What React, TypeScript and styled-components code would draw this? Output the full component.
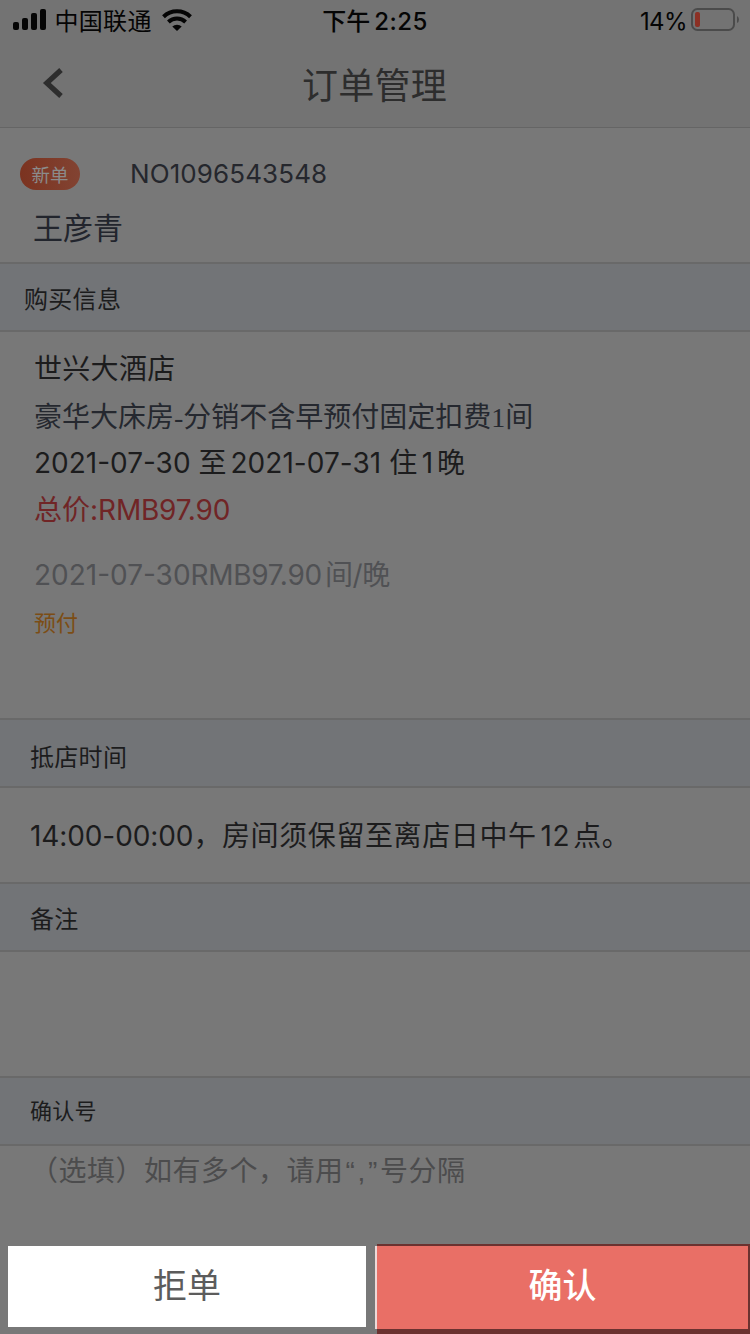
import React from "react";
import styled, { createGlobalStyle } from "styled-components";

const GlobalStyle = createGlobalStyle`
  * { box-sizing: border-box; }
  body { margin: 0; background: #787878; }
`;

const Screen = styled.main`
  width: 750px;
  height: 1334px;
  display: flex;
  flex-direction: column;
  overflow: hidden;
  background: #787878;
  color: #1c1c1d;
  font-family: Inter, "Noto Sans CJK SC", sans-serif;
`;

const StatusBar = styled.div`
  height: 40px;
  flex: none;
  display: grid;
  grid-template-columns: 250px 250px 250px;
  background: #737373;
  color: #050505;
`;

const StatusGroup = styled.div<{ $justify: string; $left?: number; $right?: number }>`
  display: flex;
  align-items: center;
  justify-content: ${(p) => p.$justify};
  padding-left: ${(p) => p.$left ?? 0}px;
  padding-right: ${(p) => p.$right ?? 0}px;
`;

const NavBar = styled.header`
  height: 88px;
  flex: none;
  display: grid;
  grid-template-columns: 110px 1fr 110px;
  background: #737373;
  border-bottom: 1px solid #656565;
`;

const BackButton = styled.button`
  border: 0;
  padding: 27px 0 0 42px;
  background: none;
  display: flex;
  align-items: flex-start;
`;

const Title = styled.h1`
  margin: 0;
  padding-right: 1px;
  text-align: center;
  font-size: 36px;
  font-weight: 400;
  line-height: 93px;
  letter-spacing: 0.2px;
  color: #2d2d2d;
`;

const Line = styled.div<{
  $size: number;
  $height: number;
  $color?: string;
  $spacing?: number;
  $weight?: number;
}>`
  font-size: ${(p) => p.$size}px;
  line-height: ${(p) => p.$height}px;
  height: ${(p) => p.$height}px;
  color: ${(p) => p.$color ?? "inherit"};
  letter-spacing: ${(p) => p.$spacing ?? 0}px;
  font-weight: ${(p) => p.$weight ?? 400};
  white-space: pre;
`;

const StatusText = styled(Line)`
  padding-top: 3px;
  line-height: 38px;
`;

const Run = styled.span<{ $spacing?: number; $before?: number; $after?: number; $font?: string }>`
  letter-spacing: ${(p) => p.$spacing ?? 0}px;
  margin-left: ${(p) => p.$before ?? 0}px;
  margin-right: ${(p) => p.$after ?? 0}px;
  font-family: ${(p) => p.$font ?? "inherit"};
`;

const SERIF = '"Liberation Serif", serif';
const SANS = '"Liberation Sans", sans-serif';

const OrderHead = styled.section`
  height: 134px;
  flex: none;
  padding: 26px 20px 0;
`;

const OrderRow = styled.div`
  display: flex;
  align-items: center;
  height: 40px;
  gap: 50px;
`;

const Badge = styled.span`
  width: 60px;
  height: 32px;
  border-radius: 16px;
  background: linear-gradient(90deg, #7b3320, #824332);
  color: #8b8b8b;
  font-size: 18.5px;
  line-height: 35px;
  text-align: center;
`;

const GuestName = styled(Line)`
  padding: 0 0 0 13px;
  margin-top: 12px;
`;

const SectionBar = styled.h2<{ $left: number; $size: number; $drop?: number }>`
  margin: 0;
  height: 70px;
  flex: none;
  padding: ${(p) => p.$drop ?? 0}px 0 0 ${(p) => p.$left}px;
  border-top: 2px solid #696969;
  border-bottom: 2px solid #696969;
  background: #727477;
  font-size: ${(p) => p.$size}px;
  line-height: 66px;
  font-weight: 400;
  letter-spacing: 0.3px;
`;

const Panel = styled.section<{ $height: number; $left?: number; $top?: number }>`
  height: ${(p) => p.$height}px;
  flex: none;
  padding: ${(p) => p.$top ?? 0}px 0 0 ${(p) => p.$left ?? 0}px;
`;

const PriceBreakdown = styled.div`
  margin-top: 18px;
`;

const Actions = styled.footer`
  height: 90px;
  flex: none;
  display: flex;
  padding-left: 8px;
`;

const ActionButton = styled.button`
  padding: 0;
  font-family: inherit;
  font-size: 34px;
  line-height: 78px;
`;

const RejectButton = styled(ActionButton)`
  width: 358px;
  height: 81px;
  margin: 2px 9px 0 0;
  padding-bottom: 2px;
  border: 0;
  background: #fff;
  color: #5c5c5c;
`;

const ConfirmEdge = styled.div`
  width: 2px;
  height: 83px;
  margin-top: 2px;
  background: #eed9d8;
`;

const ConfirmButton = styled(ActionButton)`
  width: 373px;
  height: 90px;
  padding-bottom: 3px;
  border: solid #6b3230;
  border-width: 2px 2px 5px 0;
  background: #e96f66;
  color: #fff;
  font-weight: 500;
`;

const SignalIcon = () => (
  <svg width="34" height="22" viewBox="0 0 34 22" fill="#050505">
    <rect x="0" y="13" width="6" height="8" rx="2" />
    <rect x="9" y="9" width="6" height="12" rx="2" />
    <rect x="18" y="4" width="6" height="17" rx="2" />
    <rect x="27" y="0" width="6" height="21" rx="2" />
  </svg>
);

const WifiIcon = () => (
  <svg width="30" height="22" viewBox="0 0 30 22" fill="none" stroke="#050505" strokeWidth="4">
    <path d="M1.500 7.700A19.500 19.500 0 0 1 28.500 7.700" />
    <path d="M6.400 13A12.500 12.500 0 0 1 23.600 13" />
    <path d="M15 22L10.300 17.600A6.700 6.700 0 0 1 19.700 17.600Z" fill="#050505" stroke="none" />
  </svg>
);

const BatteryIcon = () => (
  <svg width="48" height="24" viewBox="0 0 48 24">
    <rect x="1" y="1" width="42" height="21" rx="5.500" fill="none" stroke="#4b4b4b" strokeWidth="2" />
    <rect x="4" y="4" width="5" height="15" rx="2" fill="#8c3024" />
    <path d="M46 8Q48 9 48 11.500T46 15Z" fill="#4b4b4b" />
  </svg>
);

const BackIcon = () => (
  <svg width="24" height="32" viewBox="0 0 24 32" fill="none" stroke="#2d2d2d" strokeWidth="5.200">
    <path d="M19 3L4.800 16L19 29" />
  </svg>
);

export default function App() {
  return (
    <>
      <GlobalStyle />
      <Screen>
        <StatusBar>
          <StatusGroup $justify="flex-start" $left={13}>
            <SignalIcon />
            <StatusText $size={24} $height={40}>
              <Run $before={7.5} $after={10} $spacing={0.3}>中国联通</Run>
            </StatusText>
            <WifiIcon />
          </StatusGroup>
          <StatusGroup $justify="center">
            <StatusText $size={24} $height={40} $weight={500}>
              下午<Run $before={4} $spacing={0.5}>2:25</Run>
            </StatusText>
          </StatusGroup>
          <StatusGroup $justify="flex-end" $right={11}>
            <StatusText $size={24} $height={40}>
              <Run $after={4} $spacing={-0.6}>14%</Run>
            </StatusText>
            <BatteryIcon />
          </StatusGroup>
        </StatusBar>
        <NavBar>
          <BackButton aria-label="返回">
            <BackIcon />
          </BackButton>
          <Title>订单管理</Title>
        </NavBar>

        <OrderHead>
          <OrderRow>
            <Badge>新单</Badge>
            <Line $size={26} $height={40} $color="#25272d" $spacing={0.1}>NO1096543548</Line>
          </OrderRow>
          <GuestName $size={30} $height={44} $color="#22252d">王彦青</GuestName>
        </OrderHead>

        <SectionBar $left={24} $size={24} $drop={3}>购买信息</SectionBar>
        <Panel $height={386} $left={34} $top={13}>
          <Line $size={28} $height={48} $spacing={0.3}>世兴大酒店</Line>
          <Line $size={28} $height={48} $color="#25282f">
            豪华大床房<Run $font={SERIF}>-</Run>分销不含早预付固定扣费<Run $font={SERIF}>1</Run>间
          </Line>
          <Line $size={28} $height={45}>2021-07-30 至<Run $before={4} $spacing={0.05}>2021-07-31 </Run>住<Run $before={4.5} $after={4}>1</Run>晚</Line>
          <Line $size={28} $height={48} $color="#702526">总价:<Run $spacing={-0.2}>RMB97.90</Run></Line>
          <PriceBreakdown>
            <Line $size={28} $height={47} $color="#505154">
              2021-07-30<Run $spacing={-0.3}>RMB97.90</Run><Run $before={3} $spacing={-0.4}>间/晚</Run>
            </Line>
            <Line $size={22} $height={49} $color="#7c4d15">预付</Line>
          </PriceBreakdown>
        </Panel>

        <SectionBar $left={30} $size={24} $drop={5}>抵店时间</SectionBar>
        <Panel $height={94} $left={30} $top={24}>
          <Line $size={28} $height={48} $spacing={0.6}><Run $spacing={-0.1}>14:00-00:00</Run>，房间须保留至离店日中午<Run $before={4} $after={3} $spacing={0.6}>12</Run>点。</Line>
        </Panel>

        <SectionBar $left={30} $size={24} $drop={3}>备注</SectionBar>
        <Panel $height={124} />

        <SectionBar $left={30} $size={22}>确认号</SectionBar>
        <Panel $height={98} $left={30} $top={1}>
          <Line $size={28} $height={48} $color="#4c4c4d" $spacing={0.5}>（选填）如有多个，请用<Run $before={2} $spacing={2.7} $font={SANS}>“,”</Run>号分隔</Line>
        </Panel>

        <Actions>
          <RejectButton>拒单</RejectButton>
          <ConfirmEdge />
          <ConfirmButton>确认</ConfirmButton>
        </Actions>
      </Screen>
    </>
  );
}
